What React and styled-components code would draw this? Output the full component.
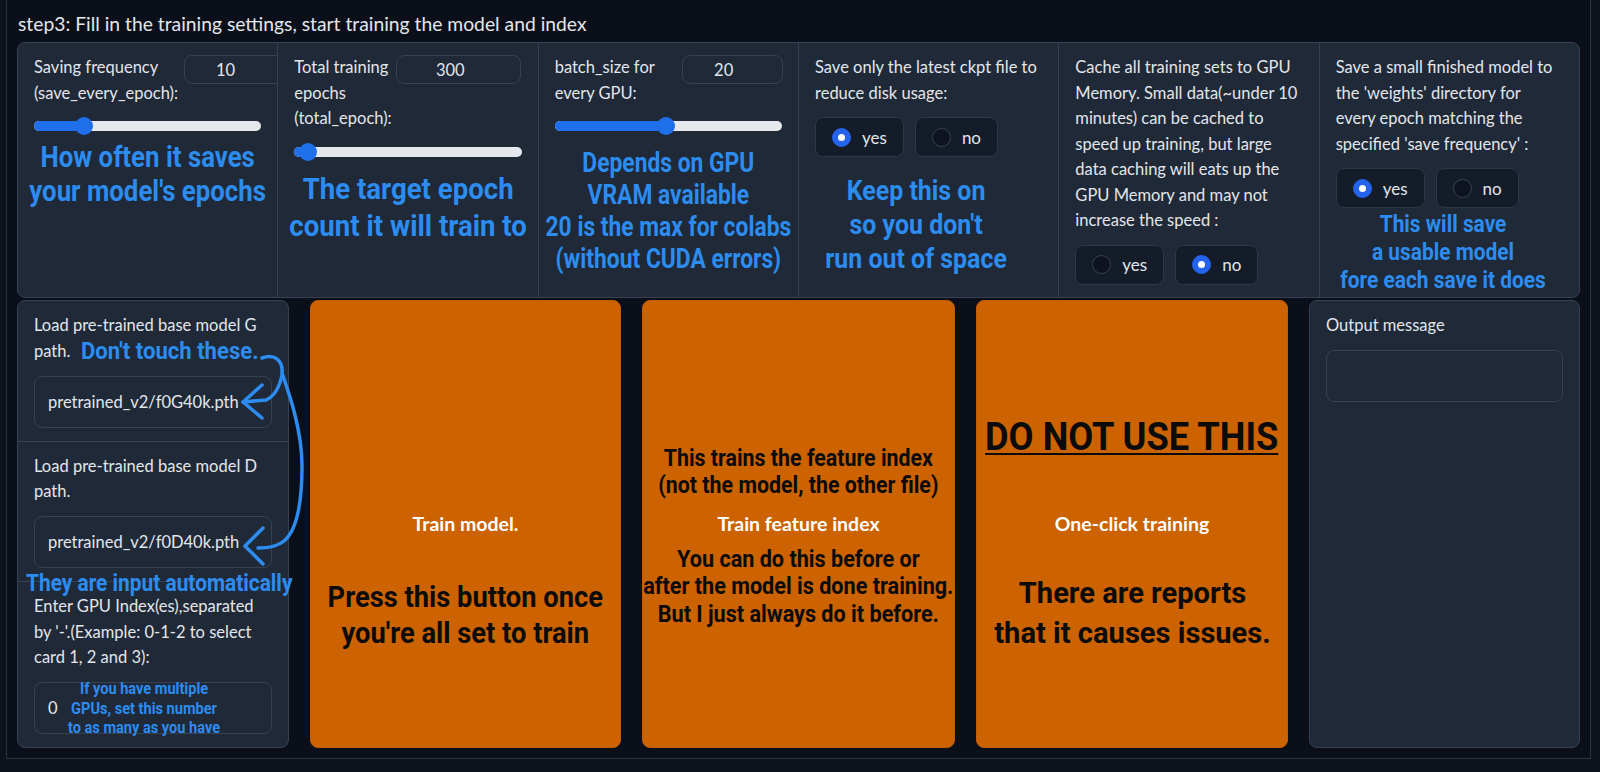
import React from "react";
import styled, { createGlobalStyle } from "styled-components";

const GlobalStyle = createGlobalStyle`
  html, body { margin: 0; padding: 0; background: #0e121b; }
  body {
    font-family: Lato, "Liberation Sans", sans-serif;
    color: #e3e6eb;
    font-size: 16.5px;
  }
  * { box-sizing: border-box; }
`;

const Frame = styled.div`
  margin: 0 9px 0 6px;
  padding: 0 10px 10px;
  background: #0b0f19;
  border: 1px solid #2b3442;
  border-top: none;
`;

const Title = styled.div`
  padding: 11px 0 6px 1px;
  font-size: 19.3px;
  line-height: 25px;
`;

const Settings = styled.div`
  display: grid;
  grid-template-columns: repeat(6, minmax(0, 1fr));
  gap: 1px;
  height: 256px;
  background: #374151;
  border: 1px solid #374151;
  border-radius: 8px;
  overflow: hidden;
`;

const Cell = styled.div`
  background: #1f2937;
  padding: 12px 16px;
  overflow: hidden;
  display: flex;
  flex-direction: column;
`;

const LabelRow = styled.div`
  display: flex;
  align-items: flex-start;
`;

const Label = styled.div`
  flex: ${p => (p.$w ? `0 0 ${p.$w}px` : "none")};
  line-height: 25.5px;
  white-space: pre;
`;

const NumberBox = styled.div`
  flex: 0 0 ${p => p.$w}px;
  height: 29px;
  border: 1px solid #374151;
  border-radius: 8px;
  padding-right: 17px;
  display: flex;
  align-items: center;
  justify-content: center;
`;

const SliderWrap = styled.div`
  height: 18px;
  margin-top: 11px;
  display: flex;
  align-items: center;
`;

const Track = styled.div`
  position: relative;
  flex: 1;
  height: 10px;
  border-radius: 5px;
  background: #e6e8ec;
`;

const Fill = styled.div`
  height: 100%;
  border-radius: 5px;
  background: #1f6fea;
`;

const Thumb = styled.div`
  position: absolute;
  top: 50%;
  width: 18px;
  height: 18px;
  border-radius: 50%;
  background: #1f6fea;
  transform: translate(-50%, -50%);
`;

const RadioRow = styled.div`
  display: flex;
  gap: 11px;
  margin-top: 11px;
`;

const RadioOption = styled.div`
  display: flex;
  align-items: center;
  gap: 11px;
  height: 40px;
  padding: 0 16px;
  background: #151c29;
  border: 1px solid #2d3747;
  border-radius: 8px;
  font-size: 17px;
`;

const Dot = styled.span`
  width: 19px;
  height: 19px;
  border-radius: 50%;
  background: ${p => (p.$on ? "#2463eb" : "#0d1320")};
  border: 1px solid ${p => (p.$on ? "#2463eb" : "#374151")};
  display: flex;
  align-items: center;
  justify-content: center;
  &::after {
    content: "";
    display: ${p => (p.$on ? "block" : "none")};
    width: 7px;
    height: 7px;
    border-radius: 50%;
    background: #fff;
  }
`;

// hand-drawn looking annotations: condensed bold, squeezed horizontally
const Note = styled.div`
  align-self: center;
  width: max-content;
  font-family: Roboto, "Liberation Sans", sans-serif;
  font-weight: 700;
  font-size: ${p => p.$size}px;
  line-height: ${p => p.$lh}px;
  color: ${p => (p.$dark ? "#0b0b0b" : "#2d8cf0")};
  text-align: center;
  white-space: pre;
  margin: ${p => p.$mt || 0}px 0 ${p => p.$mb || 0}px;
  transform: translateX(${p => p.$dx || 0}px) scaleX(${p => p.$sx || 0.85});
  text-decoration: ${p => (p.$underline ? "underline" : "none")};
  text-decoration-thickness: 2px;
  text-underline-offset: 3px;
`;

const InlineNote = styled.span`
  display: inline-block;
  font-family: Roboto, "Liberation Sans", sans-serif;
  font-weight: 700;
  font-size: 24px;
  line-height: 20px;
  color: #2d8cf0;
  margin-left: 11px;
  white-space: nowrap;
  transform-origin: left center;
  transform: translateY(2px) scaleX(0.92);
`;

const ActionRow = styled.div`
  display: grid;
  grid-template-columns: 272px 311px 313px 312px 271px;
  gap: 21px;
  margin-top: 2px;
  height: 448px;
`;

const SidePanel = styled.div`
  position: relative;
  background: #1f2937;
  border: 1px solid #374151;
  border-radius: 8px;
`;

const Section = styled.div`
  padding: 12px 16px 13px;
  & + & { border-top: 1px solid #374151; }
`;

const FieldLabel = styled.div`
  line-height: 25.5px;
  margin-bottom: 11.5px;
  white-space: pre;
`;

const TextBox = styled.div`
  position: relative;
  height: 52px;
  border: 1px solid #374151;
  border-radius: 8px;
  padding: 0 13px;
  display: flex;
  align-items: center;
`;

const BoxNote = styled(Note)`
  position: absolute;
  left: 109px;
  top: -4px;
  margin: 0;
  transform: translateX(-50%) scaleX(0.91);
`;

const SideNote = styled(Note)`
  position: absolute;
  left: 8px;
  top: 270px;
  margin: 0;
  transform-origin: left center;
`;

const Arrows = styled.svg`
  position: absolute;
  left: 220px;
  top: 50px;
  overflow: visible;
`;

const OrangeButton = styled.div`
  display: grid;
  grid-template-columns: minmax(0, 1fr);
  grid-template-rows: 1fr auto 1fr;
  background: #cc6200;
  border: 1px solid #c25c00;
  border-radius: 8px;
  text-align: center;
  overflow: hidden;
`;

const Above = styled.div`
  display: flex;
  flex-direction: column;
  justify-content: flex-end;
`;

const Below = styled.div`
  display: flex;
  flex-direction: column;
  justify-content: flex-start;
`;

const ButtonLabel = styled.div`
  font-weight: 700;
  font-size: 19.5px;
  line-height: 25.5px;
  color: #fff;
`;

const OutputPanel = styled(SidePanel)`
  padding: 12px 16px;
`;

const OutputBox = styled.div`
  height: 52px;
  margin-top: 11px;
  border: 1px solid #374151;
  border-radius: 8px;
`;

const Slider = ({ pct }) => (
  <SliderWrap>
    <Track>
      <Fill style={{ width: `${pct}%` }} />
      <Thumb style={{ left: `${pct}%` }} />
    </Track>
  </SliderWrap>
);

const Radios = ({ value }) => (
  <RadioRow>
    <RadioOption><Dot $on={value === "yes"} />yes</RadioOption>
    <RadioOption><Dot $on={value === "no"} />no</RadioOption>
  </RadioRow>
);

const App = () => (
  <>
    <GlobalStyle />
    <Frame>
      <Title>step3: Fill in the training settings, start training the model and index</Title>
      <Settings>
        <Cell>
          <LabelRow>
            <Label $w={150}>{"Saving frequency\n(save_every_epoch):"}</Label>
            <NumberBox $w={100}>10</NumberBox>
          </LabelRow>
          <Slider pct={22} />
          <Note $size={30} $lh={34} $mt={5} $sx={0.86}>{"How often it saves\nyour model's epochs"}</Note>
        </Cell>
        <Cell>
          <LabelRow>
            <Label $w={102}>{"Total training\nepochs\n(total_epoch):"}</Label>
            <NumberBox $w={125}>300</NumberBox>
          </LabelRow>
          <Slider pct={6} />
          <Note $size={30} $lh={37} $mt={9} $sx={0.92}>{"The target epoch\ncount it will train to"}</Note>
        </Cell>
        <Cell>
          <LabelRow>
            <Label $w={127}>{"batch_size for\nevery GPU:"}</Label>
            <NumberBox $w={101}>20</NumberBox>
          </LabelRow>
          <Slider pct={49} />
          <Note $size={27} $lh={32} $mt={12} $sx={0.845}>
            {"Depends on GPU\nVRAM available\n20 is the max for colabs\n(without CUDA errors)"}
          </Note>
        </Cell>
        <Cell>
          <Label>{"Save only the latest ckpt file to\nreduce disk usage:"}</Label>
          <Radios value="yes" />
          <Note $size={28} $lh={34} $mt={16.5} $dx={-13} $sx={0.89}>{"Keep this on\nso you don't\nrun out of space"}</Note>
        </Cell>
        <Cell>
          <Label>
            {"Cache all training sets to GPU\nMemory. Small data(~under 10\nminutes) can be cached to\nspeed up training, but large\ndata caching will eats up the\nGPU Memory and may not\nincrease the speed :"}
          </Label>
          <Radios value="no" />
        </Cell>
        <Cell>
          <Label>
            {"Save a small finished model to\nthe 'weights' directory for\nevery epoch matching the\nspecified 'save frequency' :"}
          </Label>
          <Radios value="yes" />
          <Note $size={24} $lh={28} $mt={2} $dx={-6} $sx={0.87}>{"This will save\na usable model\nfore each save it does"}</Note>
        </Cell>
      </Settings>

      <ActionRow>
        <SidePanel>
          <Section>
            <FieldLabel>
              {"Load pre-trained base model G\npath."}
              <InlineNote>Don't touch these.</InlineNote>
            </FieldLabel>
            <TextBox>pretrained_v2/f0G40k.pth</TextBox>
          </Section>
          <Section>
            <FieldLabel>{"Load pre-trained base model D\npath."}</FieldLabel>
            <TextBox>pretrained_v2/f0D40k.pth</TextBox>
          </Section>
          <Section>
            <FieldLabel>{"Enter GPU Index(es),separated\nby '-'.(Example: 0-1-2 to select\ncard 1, 2 and 3):"}</FieldLabel>
            <TextBox>
              0
              <BoxNote $size={16} $lh={19.5}>
                {"If you have multiple\nGPUs, set this number\nto as many as you have"}
              </BoxNote>
            </TextBox>
          </Section>
          <SideNote $size={24} $lh={24} $sx={0.87}>They are input automatically</SideNote>
          <Arrows width="72" height="220" viewBox="0 0 72 220" fill="none" stroke="#2d8cf0"
            strokeWidth="3.5" strokeLinecap="round" strokeLinejoin="round">
            <path d="M24 7 C37 2 45 10 44 22 C52 45 64 80 64 115 C64 155 58 180 46 190 C40 195 32 197 20 197" />
            <path d="M24 34 L5 51 L24 67" />
            <path d="M5 51 L28 49 C35 46 41 38 44 24" />
            <path d="M25 177 L7 195 L25 213" />
          </Arrows>
        </SidePanel>

        <OrangeButton>
          <Above />
          <ButtonLabel>Train model.</ButtonLabel>
          <Below>
            <Note $dark $size={30} $lh={36} $mt={42} $sx={0.91}>{"Press this button once\nyou're all set to train"}</Note>
          </Below>
        </OrangeButton>

        <OrangeButton>
          <Above>
            <Note $dark $size={24} $lh={27} $mb={12} $sx={0.89}>{"This trains the feature index\n(not the model, the other file)"}</Note>
          </Above>
          <ButtonLabel>Train feature index</ButtonLabel>
          <Below>
            <Note $dark $size={24} $lh={27.5} $mt={9} $sx={0.9}>
              {"You can do this before or\nafter the model is done training.\nBut I just always do it before."}
            </Note>
          </Below>
        </OrangeButton>

        <OrangeButton>
          <Above>
            <Note $dark $underline $size={39} $lh={44} $mb={52} $sx={0.93}>DO NOT USE THIS</Note>
          </Above>
          <ButtonLabel>One-click training</ButtonLabel>
          <Below>
            <Note $dark $size={30} $lh={40} $mt={36} $sx={0.97}>{"There are reports\nthat it causes issues."}</Note>
          </Below>
        </OrangeButton>

        <OutputPanel>
          <Label>Output message</Label>
          <OutputBox />
        </OutputPanel>
      </ActionRow>
    </Frame>
  </>
);

export default App;
